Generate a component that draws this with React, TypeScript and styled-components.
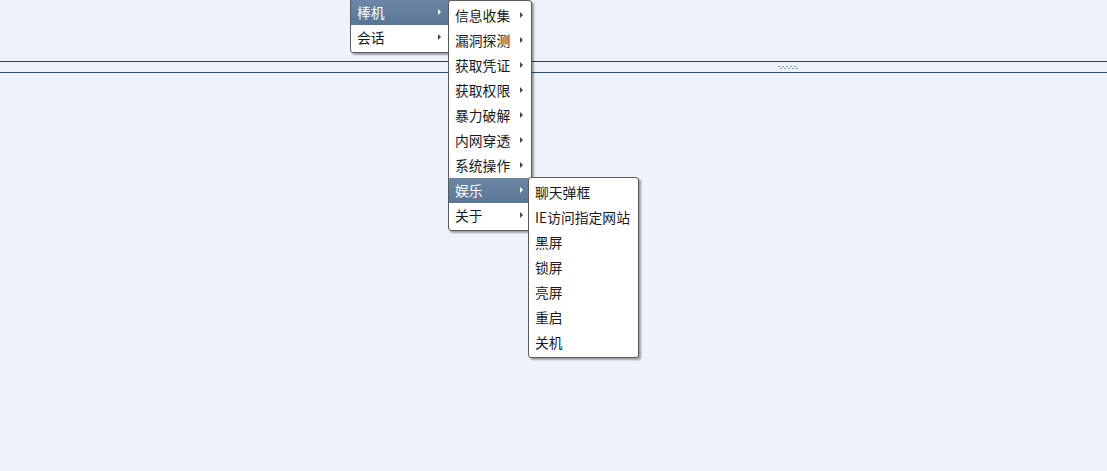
import React from "react";
import styled, { createGlobalStyle } from "styled-components";

type Item = { label: string; sub?: boolean; active?: boolean };

const GlobalStyle = createGlobalStyle`
  html, body {
    margin: 0;
    padding: 0;
    background: #eef2fa;
  }
  body {
    font-family: "Noto Sans CJK SC", "Liberation Sans", sans-serif;
  }
`;

const Page = styled.div`
  position: relative;
  width: 1107px;
  height: 471px;
  overflow: hidden;
  display: flex;
  flex-direction: column;
  background: #eef2fa;
`;

const TopPane = styled.div`
  height: 61px;
`;

const Splitter = styled.div`
  height: 10px;
  border-top: 1px solid #3a3d44;
  border-bottom: 1px solid #2c4a6a;
  display: flex;
  align-items: center;
  justify-content: flex-end;
  padding-right: 309px;
`;

const Grip = styled.div`
  display: flex;
  flex-direction: column;
  gap: 1px;
`;

const GripRow = styled.div<{ $shift: number }>`
  width: 18px;
  height: 1px;
  margin-left: ${(p) => p.$shift}px;
  background-image: linear-gradient(90deg, #8b97a6 2px, transparent 2px);
  background-size: 4px 1px;
`;

const BottomPane = styled.div`
  flex: 1;
`;

const Menu = styled.div<{ $left: number; $top: number; $width: number }>`
  position: absolute;
  left: ${(p) => p.$left}px;
  top: ${(p) => p.$top}px;
  width: ${(p) => p.$width}px;
  background: #fff;
  border: 1px solid #5a5a5a;
  border-radius: 3px;
  box-shadow: 2px 2px 2px rgba(0, 0, 0, 0.35);
  padding: 2px 0;
  box-sizing: border-box;
`;

const Row = styled.div<{ $active?: boolean }>`
  position: relative;
  height: 25px;
  line-height: 25px;
  padding-left: 6px;
  font-size: 13.8px;
  color: ${(p) => (p.$active ? "#fff" : "#1a1a1a")};
  background: ${(p) => (p.$active ? "linear-gradient(#6c87a5, #5b7595)" : "transparent")};
  white-space: nowrap;
`;

const Arrow = styled.span<{ $active?: boolean }>`
  position: absolute;
  right: 8px;
  top: 9px;
  width: 0;
  height: 0;
  border-top: 3px solid transparent;
  border-bottom: 3px solid transparent;
  border-left: 3px solid ${(p) => (p.$active ? "#fff" : "#444")};
`;

const MenuList: React.FC<{ left: number; top: number; width: number; items: Item[] }> = ({
  left,
  top,
  width,
  items
}) => (
  <Menu $left={left} $top={top} $width={width}>
    {items.map((it) => (
      <Row key={it.label} $active={it.active}>
        {it.label}
        {it.sub && <Arrow $active={it.active} />}
      </Row>
    ))}
  </Menu>
);

const rootItems: Item[] = [
  { label: "棒机", sub: true, active: true },
  { label: "会话", sub: true }
];

const toolItems: Item[] = [
  { label: "信息收集", sub: true },
  { label: "漏洞探测", sub: true },
  { label: "获取凭证", sub: true },
  { label: "获取权限", sub: true },
  { label: "暴力破解", sub: true },
  { label: "内网穿透", sub: true },
  { label: "系统操作", sub: true },
  { label: "娱乐", sub: true, active: true },
  { label: "关于", sub: true }
];

const funItems: Item[] = [
  { label: "聊天弹框" },
  { label: "IE访问指定网站" },
  { label: "黑屏" },
  { label: "锁屏" },
  { label: "亮屏" },
  { label: "重启" },
  { label: "关机" }
];

export default function App() {
  return (
    <Page>
      <GlobalStyle />
      <TopPane />
      <Splitter>
        <Grip>
          <GripRow $shift={0} />
          <GripRow $shift={2} />
        </Grip>
      </Splitter>
      <BottomPane />
      <MenuList left={350} top={-3} width={100} items={rootItems} />
      <MenuList left={448} top={0} width={84} items={toolItems} />
      <MenuList left={528} top={177} width={111} items={funItems} />
    </Page>
  );
}
